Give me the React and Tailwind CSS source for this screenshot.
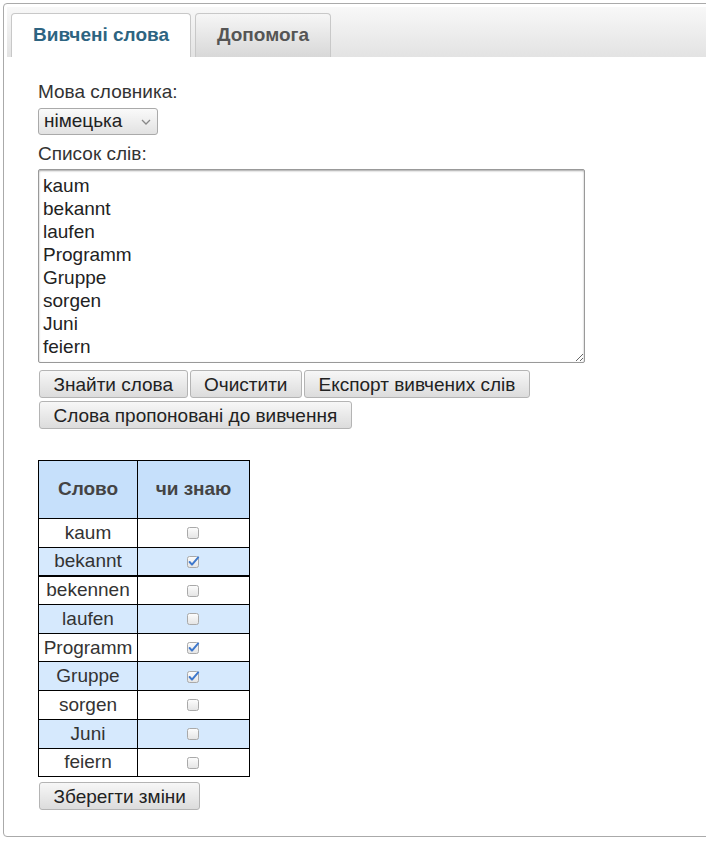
import { useState } from "react"

const words = [
  { w: "kaum", known: false },
  { w: "bekannt", known: true },
  { w: "bekennen", known: false },
  { w: "laufen", known: false },
  { w: "Programm", known: true },
  { w: "Gruppe", known: true },
  { w: "sorgen", known: false },
  { w: "Juni", known: false },
  { w: "feiern", known: false },
]

const listText = "kaum\nbekannt\nlaufen\nProgramm\nGruppe\nsorgen\nJuni\nfeiern"

const Btn = ({ children }) => (
  <button className="h-[28px] px-[13.5px] rounded-[3px] border border-[#b4b4b4] bg-gradient-to-b from-[#f7f7f7] to-[#dcdcdc] text-[19px] leading-[23px] text-[#222]">
    {children}
  </button>
)

const Check = ({ checked, onClick }) => (
  <span onClick={onClick} className="inline-block w-[13px] h-[13px] cursor-pointer">
    <svg width="13" height="13" viewBox="0 0 13 13">
      <defs>
        <linearGradient id="cbg" x1="0" y1="0" x2="0" y2="1">
          <stop offset="0" stopColor="#fdfdfd" />
          <stop offset="1" stopColor="#e4e4e4" />
        </linearGradient>
      </defs>
      <rect x="0.5" y="1.5" width="11" height="11" rx="2" fill="url(#cbg)" stroke="#a9a9a9" />
      {checked && (
        <path d="M2.6 7 L5 9.6 L11.2 2.4" fill="none" stroke="#3e78cc" strokeWidth="2" strokeLinecap="round" strokeLinejoin="round" />
      )}
    </svg>
  </span>
)

const App = () => {
  const [rows, setRows] = useState(words)

  const toggle = (i) => {
    setRows(rows.map((r, j) => (j === i ? { ...r, known: !r.known } : r)))
  }

  return (
    <div className="w-[706px] h-[842px] overflow-hidden bg-white font-['Liberation_Sans',Arial,sans-serif] text-[#333]">
      <div className="ml-[3px] mt-[3px] w-[712px] h-[834px] border border-[#aaa] rounded-[4px] p-[3px]">
        <div className="h-[50px] flex items-end gap-[4px] pl-[4px] bg-gradient-to-b from-[#f8f8f8] to-[#e3e3e3]">
          <div className="w-[180px] h-[44px] flex items-center justify-center bg-white border border-b-0 border-[#c8c8c8] rounded-t-[4px] text-[19px] font-bold text-[#2d6481]">
            Вивчені слова
          </div>
          <div className="w-[136px] h-[44px] flex items-center justify-center bg-gradient-to-b from-[#f6f6f6] to-[#d8d8d8] border border-b-0 border-[#c8c8c8] rounded-t-[4px] text-[19px] font-bold text-[#555]">
            Допомога
          </div>
        </div>

        <div className="pl-[31px] pt-[23px]">
          <div className="text-[19px] leading-[23px]">Мова словника:</div>
          <div className="mt-[5px] w-[120px] h-[27px] flex items-center justify-between pl-[5px] pr-[6px] rounded-[3px] border border-[#aaa] bg-gradient-to-b from-[#fafafa] to-[#e2e2e2] text-[19px] text-[#222]">
            <span>німецька</span>
            <svg width="10" height="6" viewBox="0 0 10 6">
              <path d="M1 1 L5 5 L9 1" fill="none" stroke="#888" strokeWidth="1.3" />
            </svg>
          </div>
          <div className="mt-[7px] text-[19px] leading-[23px]">Список слів:</div>
          <textarea
            readOnly
            defaultValue={listText}
            className="mt-[4px] block w-[547px] h-[194px] border border-[#999] shadow-[inset_0_1px_2px_rgba(0,0,0,0.35)] rounded-[2px] px-[4px] pt-[4px] text-[19px] leading-[23px] text-[#222] outline-none overflow-hidden"
          />
          <div className="mt-[7px] flex gap-[2px] pl-[1px]">
            <Btn>Знайти слова</Btn>
            <Btn>Очистити</Btn>
            <Btn>Експорт вивчених слів</Btn>
          </div>
          <div className="mt-[3px] flex pl-[1px]">
            <Btn>Слова пропоновані до вивчення</Btn>
          </div>

          <table className="mt-[31px] border-collapse border border-black text-[19px]">
            <thead>
              <tr className="h-[58px] bg-[#c6e0fb]">
                <th className="w-[99px] border border-black font-bold text-[#444]">Слово</th>
                <th className="w-[112px] border border-black font-bold text-[#444]">чи знаю</th>
              </tr>
            </thead>
            <tbody>
              {rows.map((r, i) => (
                <tr
                  key={r.w}
                  className={
                    (i % 2 === 1 ? "h-[28.7px] bg-[#d6e9fd]" : "h-[28.7px] bg-white") +
                    (i === 2 ? " border-t-2 border-black" : "")
                  }
                >
                  <td className="border border-black text-center leading-[22px] px-[3px]">{r.w}</td>
                  <td className="border border-black text-center">
                    <div className="flex justify-center">
                      <Check checked={r.known} onClick={() => toggle(i)} />
                    </div>
                  </td>
                </tr>
              ))}
            </tbody>
          </table>

          <div className="mt-[5px] pl-[1px]">
            <Btn>Зберегти зміни</Btn>
          </div>
        </div>
      </div>
    </div>
  )
}

export default App
